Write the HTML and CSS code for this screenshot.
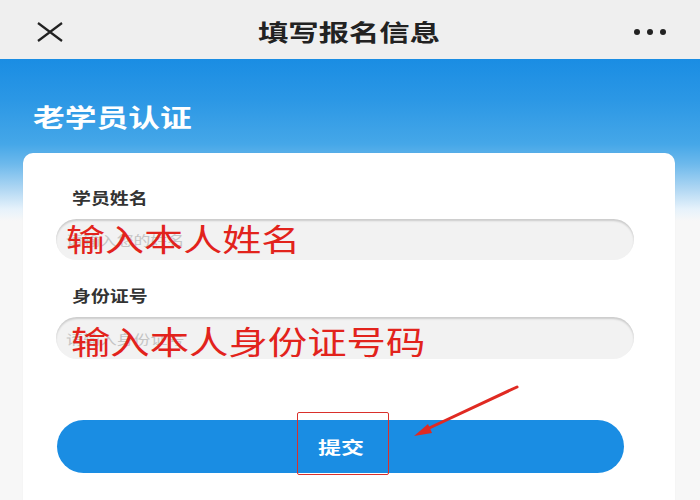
FILE: index.html
```html
<!DOCTYPE html>
<html lang="zh-CN">
<head>
<meta charset="utf-8">
<title>填写报名信息</title>
<link rel="stylesheet" href="styles.css">
</head>
<body>
<div class="page">
  <header class="topbar">
    <svg class="icon-close" width="26" height="20" viewBox="0 0 26 20"><path d="M1 1 L25 19 M25 1 L1 19" stroke="#222" stroke-width="2.2" fill="none"/></svg>
    <h1 class="title"><span class="wide">填写报名信息</span></h1>
    <div class="more"><span></span><span></span><span></span></div>
  </header>
  <main class="hero">
    <h2 class="section-title"><span class="wide">老学员认证</span></h2>
    <section class="card">
      <div class="field">
        <div class="label"><span class="wide">学员姓名</span></div>
        <div class="input input-name">
          <span class="placeholder wide">请输入您的姓名</span>
          <span class="note note-name wide">输入本人姓名</span>
        </div>
      </div>
      <div class="field">
        <div class="label"><span class="wide">身份证号</span></div>
        <div class="input input-id">
          <span class="placeholder wide">请输入身份证号</span>
          <span class="note note-id wide">输入本人身份证号码</span>
        </div>
      </div>
      <div class="btn-wrap">
        <button class="submit"><span class="wide">提交</span></button>
        <div class="mark-box"></div>
      </div>
    </section>
    <svg class="arrow" width="120" height="60" viewBox="0 0 120 60">
      <path d="M116 2 L24 45" stroke="#e02a22" stroke-width="3" fill="none" stroke-linecap="round"/>
      <path d="M13 51 L27 39 L31 48 Z" fill="#e02a22"/>
    </svg>
  </main>
</div>
</body>
</html>
```

FILE: styles.css
```css
* { box-sizing: border-box; margin: 0; padding: 0; }
html, body { width: 700px; height: 500px; overflow: hidden; }
body {
  font-family: "Noto Sans CJK SC", "Noto Sans", sans-serif;
  background: #f7f7f7;
}
.page { position: relative; width: 700px; height: 500px; }
.wide { display: inline-block; white-space: nowrap; transform-origin: left center; }

.topbar {
  height: 59px;
  background: #efefef;
  display: flex;
  align-items: center;
  padding: 0 34px 0 37px;
}
.icon-close { display: block; margin-top: 5px; }
.title {
  flex: 1;
  text-align: center;
  font-size: 23px;
  line-height: 23px;
  font-weight: bold;
  color: #222;
  margin-top: 3px;
  padding-left: 0;
}
.title .wide { transform: scaleX(1.32); transform-origin: center center; }
.more { display: flex; gap: 7px; margin-top: 5px; }
.more span { width: 6px; height: 6px; border-radius: 50%; background: #222; display: block; }

.hero {
  position: relative;
  height: 441px;
  background: linear-gradient(180deg, #1a8de3 0px, #2b97e5 40px, #45a7e8 85px, #6db9ec 105px, #b0d7f3 130px, #e6f2fb 150px, #f7f7f7 162px);
  padding-top: 44px;
}
.section-title {
  color: #fff;
  font-size: 25px;
  line-height: 26px;
  font-weight: bold;
  padding-left: 33px;
}
.section-title .wide { transform: scaleX(1.27); }
.card {
  margin: 24px 25px 0 23px;
  background: #fff;
  border-radius: 10px;
  height: 360px;
  padding: 36px 0 0 33px;
  box-shadow: 0 0 2px rgba(0,0,0,0.04);
}
.field { display: flex; flex-direction: column; }
.field + .field { margin-top: 27px; }
.label {
  font-size: 15.5px;
  line-height: 17px;
  font-weight: bold;
  color: #333;
  padding-left: 16px;
}
.label .wide { transform: scaleX(1.22); }
.input {
  position: relative;
  margin-top: 13px;
  width: 578px;
  height: 41px;
  border-radius: 21px;
  background: #f2f2f2;
  box-shadow: inset 0 2px 2px rgba(0,0,0,0.16);
  display: flex;
  align-items: center;
  padding-left: 10px;
}
.input-id { height: 42px; margin-top: 13px; }
.placeholder {
  font-size: 13px;
  color: #c4c4c4;
  transform: scaleX(1.3);
}
.note {
  position: absolute;
  color: #e2231c;
}
.note-name {
  left: 10px;
  top: 1px;
  font-size: 31px;
  line-height: 36px;
  transform: scaleX(1.26);
}
.note-id {
  left: 15px;
  top: 4px;
  font-size: 32px;
  line-height: 38px;
  transform: scaleX(1.23);
}
.btn-wrap { position: relative; margin-top: 61px; width: 568px; padding-left: 1px; }
.submit {
  display: block;
  width: 567px;
  height: 53px;
  border: none;
  border-radius: 27px;
  background: #1a8de3;
  color: #fff;
  font-family: inherit;
  font-size: 17px;
  font-weight: bold;
  text-align: center;
}
.submit .wide { transform: scaleX(1.35); transform-origin: center center; }
.mark-box {
  position: absolute;
  left: 241px;
  top: -8px;
  width: 92px;
  height: 63px;
  border: 1.5px solid #d9302b;
  border-radius: 2px;
}
.arrow {
  position: absolute;
  left: 401px;
  top: 326px;
}
```
